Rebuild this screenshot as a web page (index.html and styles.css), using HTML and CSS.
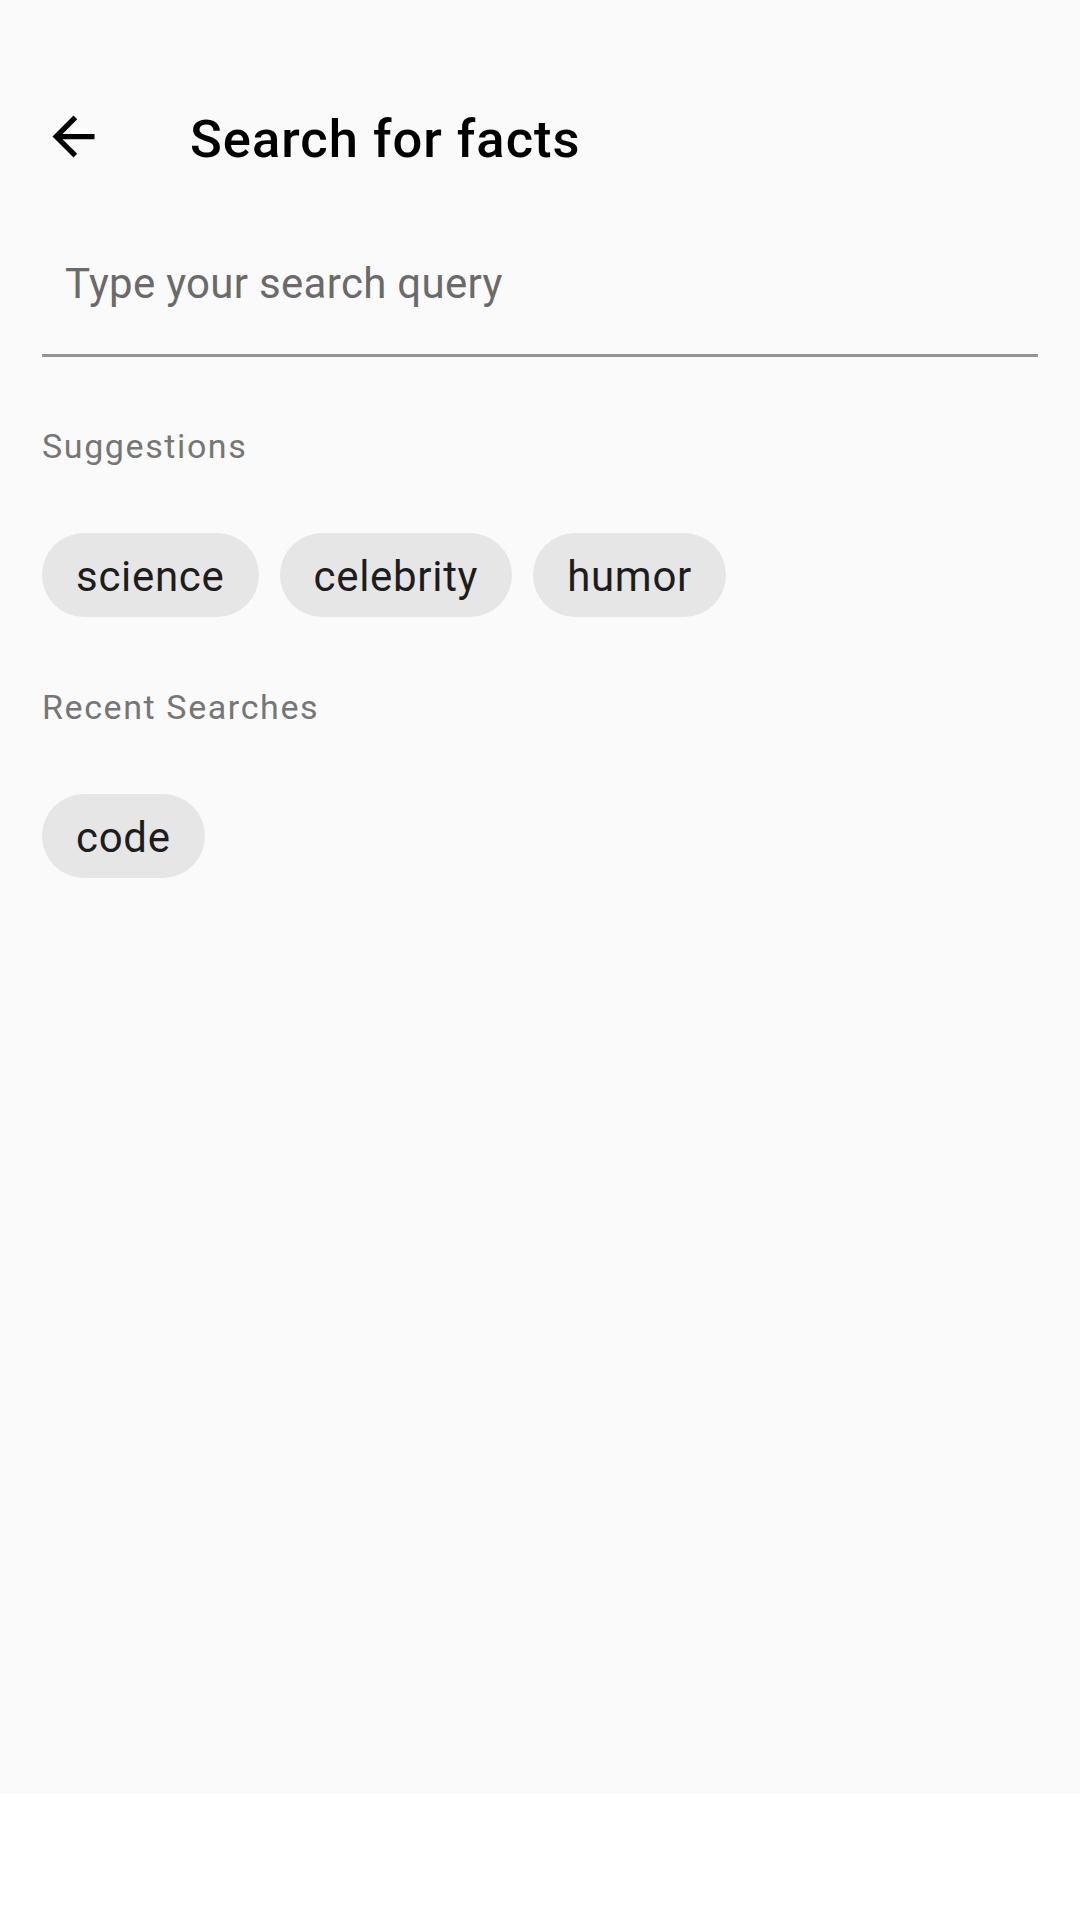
FILE: index.html
```html
<!DOCTYPE html>
<html lang="en">
<head>
<meta charset="utf-8">
<title>Search for facts</title>
<link rel="stylesheet" href="styles.css">
</head>
<body>
<div class="screen">
  <div class="statusbar"></div>
  <header class="appbar">
    <button class="nav-btn" aria-label="Back">
      <svg class="nav-icon" viewBox="0 0 24 24" width="63" height="63"><path d="M20 11H7.83l5.59-5.59L12 4l-8 8 8 8 1.41-1.41L7.83 13H20v-2z" fill="#000"/></svg>
    </button>
    <h1 class="title">Search for facts</h1>
  </header>
  <div class="field">
    <span class="placeholder">Type your search query</span>
  </div>
  <section class="group">
    <h2 class="label">Suggestions</h2>
    <div class="chips">
      <span class="chip">science</span>
      <span class="chip">celebrity</span>
      <span class="chip">humor</span>
    </div>
  </section>
  <section class="group">
    <h2 class="label">Recent Searches</h2>
    <div class="chips">
      <span class="chip">code</span>
    </div>
  </section>
</div>
<div class="navbar"></div>
</body>
</html>
```

FILE: styles.css
```css
html, body {
  margin: 0;
  padding: 0;
  background: #ffffff;
  font-family: Roboto, "Noto Sans", "Liberation Sans", sans-serif;
}

.screen {
  height: 1793px;
  background: #fafafa;
  display: flex;
  flex-direction: column;
}

.statusbar {
  height: 63px;
  flex: none;
}

.appbar {
  height: 147px;
  flex: none;
  display: flex;
  align-items: center;
}

.nav-btn {
  width: 190px;
  height: 147px;
  padding: 0 0 0 42px;
  margin: 0;
  border: 0;
  background: transparent;
  display: flex;
  align-items: center;
  flex: none;
}

.nav-icon {
  display: block;
}

.title {
  margin: 0;
  padding-top: 5px;
  font-size: 52.5px;
  font-weight: 500;
  letter-spacing: 1px;
  color: #000;
  line-height: normal;
}

.field {
  margin: 0 42px;
  border-bottom: 3px solid #949494;
  display: flex;
  align-items: center;
  padding: 3px 0 0 23px;
  box-sizing: content-box;
  height: 141px;
}

.placeholder {
  font-size: 42px;
  letter-spacing: 0.3px;
  color: #6a6a6a;
  line-height: normal;
}

.group {
  padding: 0 42px;
}

.label {
  margin: 69px 0 0;
  font-size: 34px;
  font-weight: 400;
  letter-spacing: 1.6px;
  line-height: 40px;
  color: #767676;
}

.chips {
  display: flex;
  gap: 21px;
  margin-top: 67px;
}

.chip {
  height: 84px;
  border-radius: 42px;
  background: #e6e6e6;
  color: #1d1d1d;
  font-size: 42px;
  letter-spacing: 0.7px;
  padding: 2px 34px 0;
  display: flex;
  align-items: center;
  box-sizing: border-box;
}

.group + .group .label {
  margin-top: 70px;
}

.group + .group .chips {
  margin-top: 67px;
}

.navbar {
  height: 127px;
  background: #ffffff;
}
```
